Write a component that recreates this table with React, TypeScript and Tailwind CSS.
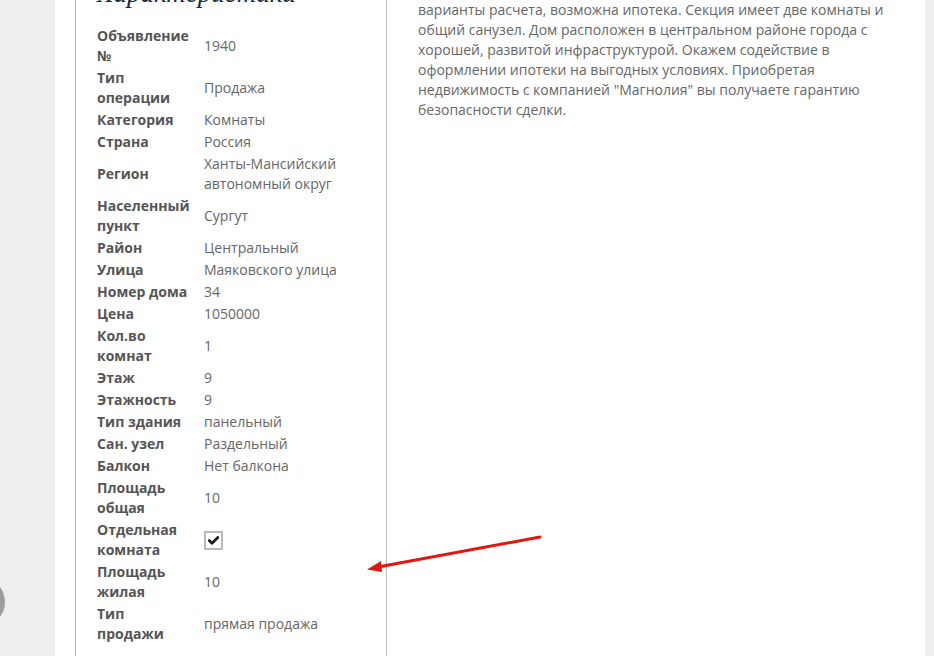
import React from 'react';

type Row = { label: React.ReactNode; value: React.ReactNode };

const Check = () => (
  <span className="inline-flex h-[19px] w-[19px] items-center justify-center border-2 border-[#b8b8b8] bg-white">
    <svg width="11" height="9" viewBox="0 0 11 9">
      <path d="M1.2 4.6 L4 7.3 L9.8 1.4" fill="none" stroke="#1e1e1e" strokeWidth="2.8" strokeLinecap="round" strokeLinejoin="round" />
    </svg>
  </span>
);

const rows: Row[] = [
  { label: <>Объявление<br />№</>, value: '1940' },
  { label: <>Тип<br />операции</>, value: 'Продажа' },
  { label: 'Категория', value: 'Комнаты' },
  { label: 'Страна', value: 'Россия' },
  { label: 'Регион', value: <>Ханты-Мансийский<br />автономный округ</> },
  { label: <>Населенный<br />пункт</>, value: 'Сургут' },
  { label: 'Район', value: 'Центральный' },
  { label: 'Улица', value: 'Маяковского улица' },
  { label: 'Номер дома', value: '34' },
  { label: 'Цена', value: '1050000' },
  { label: <>Кол.во<br />комнат</>, value: '1' },
  { label: 'Этаж', value: '9' },
  { label: 'Этажность', value: '9' },
  { label: 'Тип здания', value: 'панельный' },
  { label: 'Сан. узел', value: 'Раздельный' },
  { label: 'Балкон', value: 'Нет балкона' },
  { label: <>Площадь<br />общая</>, value: '10' },
  { label: <>Отдельная<br />комната</>, value: <Check /> },
  { label: <>Площадь<br />жилая</>, value: '10' },
  { label: <>Тип<br />продажи</>, value: 'прямая продажа' },
];

const description = [
  'варианты расчета, возможна ипотека. Секция имеет две комнаты и',
  'общий санузел. Дом расположен в центральном районе города с',
  'хорошей, развитой инфраструктурой. Окажем содействие в',
  'оформлении ипотеки на выгодных условиях. Приобретая',
  'недвижимость с компанией "Магнолия" вы получаете гарантию',
  'безопасности сделки.',
];

export default function App() {
  return (
    <div
      className="relative flex h-[656px] w-[934px] overflow-hidden bg-[#eeeeee]"
      style={{ fontFamily: '"Open Sans", "Liberation Sans", sans-serif' }}
    >
      {/* scroll-to-top кнопка, видна только краем */}
      <div className="absolute left-[-45px] top-[577px] h-[50px] w-[50px] rounded-full bg-[#9c9c9c]" />

      <div className="ml-[55px] flex h-full w-[870px] bg-white pl-[20px]">
        {/* характеристики */}
        <div className="h-[700px] w-[312px] shrink-0 border-x border-[#bdbdbd] pl-[21px]">
          <h2
            className="-mt-[21px] mb-[18px] whitespace-nowrap text-[27px] italic leading-[28px] text-[#1b2a3a]"
            style={{ fontFamily: '"Liberation Serif", "DejaVu Serif", serif' }}
          >
            Характеристики
          </h2>
          <div className="grid grid-cols-[107px_1fr] text-[14px] leading-[20px]">
            {rows.map((r, i) => (
              <React.Fragment key={i}>
                <div className="flex items-center py-[1px] font-bold text-[#555555]">
                  <span>{r.label}</span>
                </div>
                <div className="flex items-center py-[1px] text-[#666666]">{r.value}</div>
              </React.Fragment>
            ))}
          </div>
        </div>

        {/* описание */}
        <div className="pl-[31px] text-[14px] leading-[20px] text-[#666666]">
          {description.map((line, i) => (
            <div key={i} className="whitespace-nowrap">
              {line}
            </div>
          ))}
        </div>
      </div>

      {/* красная стрелка */}
      <svg className="absolute left-0 top-0" width="934" height="656" viewBox="0 0 934 656">
        <line x1="540" y1="537" x2="378" y2="567" stroke="#e3150f" strokeWidth="3" strokeLinecap="round" />
        <path d="M367 569.5 L381 561 L382 572 Z" fill="#e3150f" />
      </svg>
    </div>
  );
}
